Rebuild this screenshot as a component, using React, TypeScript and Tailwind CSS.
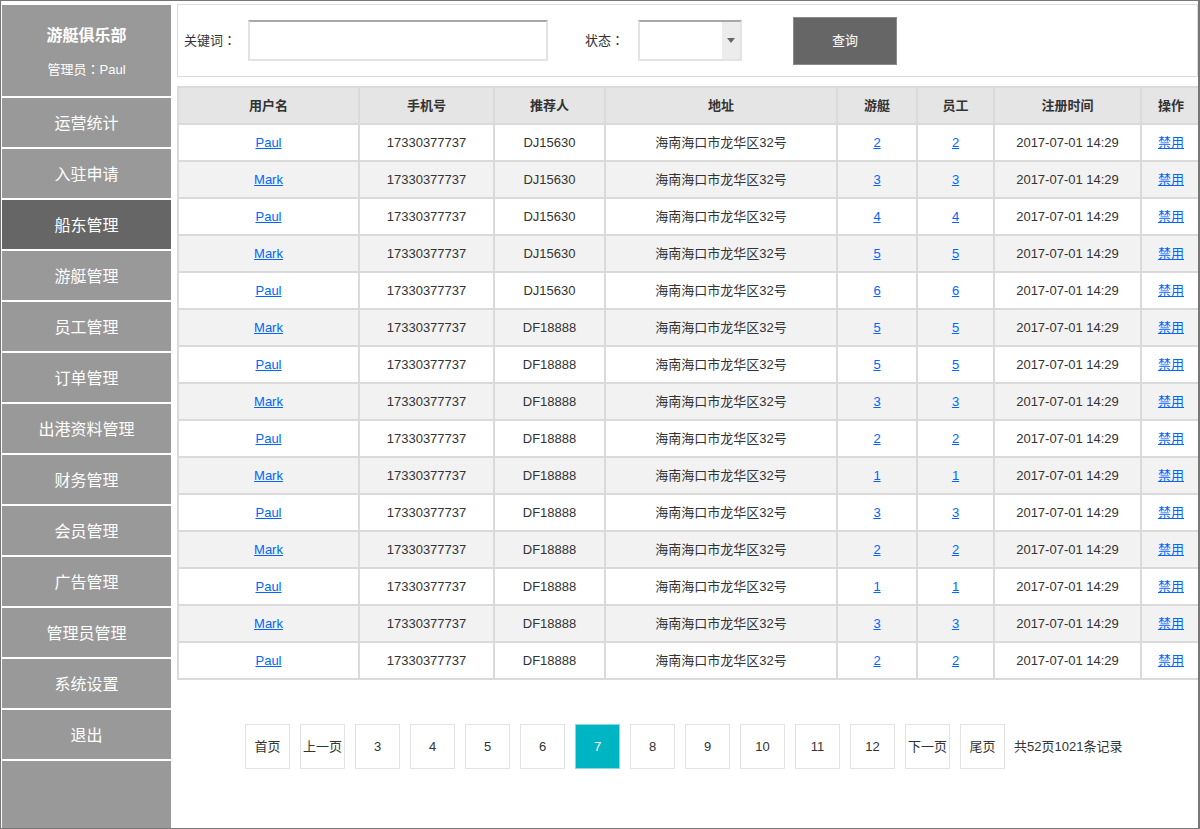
import React from "react";

const menu = [
  "运营统计",
  "入驻申请",
  "船东管理",
  "游艇管理",
  "员工管理",
  "订单管理",
  "出港资料管理",
  "财务管理",
  "会员管理",
  "广告管理",
  "管理员管理",
  "系统设置",
  "退出",
];

const rows: [string, string, number][] = [
  ["Paul", "DJ15630", 2],
  ["Mark", "DJ15630", 3],
  ["Paul", "DJ15630", 4],
  ["Mark", "DJ15630", 5],
  ["Paul", "DJ15630", 6],
  ["Mark", "DF18888", 5],
  ["Paul", "DF18888", 5],
  ["Mark", "DF18888", 3],
  ["Paul", "DF18888", 2],
  ["Mark", "DF18888", 1],
  ["Paul", "DF18888", 3],
  ["Mark", "DF18888", 2],
  ["Paul", "DF18888", 1],
  ["Mark", "DF18888", 3],
  ["Paul", "DF18888", 2],
];

const headers = ["用户名", "手机号", "推荐人", "地址", "游艇", "员工", "注册时间", "操作"];

const gridCols = "grid grid-cols-[181px_135px_111px_232px_80px_77px_147px_60px] w-[1023px]";
const cell = "h-[37px] border-l-2 border-t-2 border-[#dadada] flex items-center justify-center";
const link = "text-[#0066ff] underline";

const pages = ["首页", "上一页", "3", "4", "5", "6", "7", "8", "9", "10", "11", "12", "下一页", "尾页"];

function Colon() {
  return <span className="font-['Noto_Sans_CJK_TC',sans-serif]">：</span>;
}

export default function App() {
  return (
    <div className="w-[1200px] h-[829px] border-t border-l border-b border-r-2 border-[#777] flex bg-white overflow-hidden font-['Liberation_Sans','Noto_Sans_CJK_SC',sans-serif] text-[#333]">
      {/* Sidebar */}
      <div className="w-[169px] ml-[1px] mt-[4px] flex flex-col gap-[2px] shrink-0">
        <div className="h-[91px] bg-[#999] flex flex-col items-center text-white pt-[21px]">
          <div className="text-[16px] leading-[20px] font-bold">游艇俱乐部</div>
          <div className="text-[13px] leading-[16px] mt-[15px]">
            管理员
            <Colon />
            Paul
          </div>
        </div>
        {menu.map((m) => (
          <div
            key={m}
            className={`h-[49px] flex items-center justify-center text-white text-[16px] pt-[3px] ${
              m === "船东管理" ? "bg-[#666]" : "bg-[#999]"
            }`}
          >
            {m}
          </div>
        ))}
        <div className="flex-1 bg-[#999]" />
      </div>

      {/* Main */}
      <div className="flex-1 ml-[6px] mt-[3px] flex flex-col overflow-hidden min-w-0">
        <div className="h-[73px] border border-[#dcdcdc] flex items-center pl-[6px] text-[13px] shrink-0">
          <span className="w-[64px]">
            关键词
            <Colon />
          </span>
          <div className="w-[300px] h-[41px] border-2 border-[#e3e3e3] border-t-[#a8a8a8] bg-white" />
          <span className="ml-[37px] w-[53px]">
            状态
            <Colon />
          </span>
          <div className="w-[104px] h-[41px] border-2 border-[#e3e3e3] border-t-[#a8a8a8] bg-white flex justify-end">
            <div className="w-[18px] h-full bg-[#ececec] flex items-center justify-center">
              <svg width="8" height="5" viewBox="0 0 8 5">
                <path d="M0 0 H8 L4 5 Z" fill="#666" />
              </svg>
            </div>
          </div>
          <button className="ml-[51px] w-[104px] h-[48px] bg-[#666] border border-[#8a8a8a] text-white text-[13px]">
            查询
          </button>
        </div>

        <div className="mt-[9px] border-b-2 border-[#dadada] w-[1023px] text-[13px]">
          <div className={`${gridCols} bg-[#e5e5e5] font-bold`}>
            {headers.map((h) => (
              <div key={h} className={cell}>
                {h}
              </div>
            ))}
          </div>
          {rows.map(([name, ref, n], i) => (
            <div key={i} className={`${gridCols} ${i % 2 === 1 ? "bg-[#f2f2f2]" : "bg-white"}`}>
              <div className={cell}>
                <a className={link}>{name}</a>
              </div>
              <div className={cell}>17330377737</div>
              <div className={cell}>{ref}</div>
              <div className={cell}>海南海口市龙华区32号</div>
              <div className={cell}>
                <a className={link}>{n}</a>
              </div>
              <div className={cell}>
                <a className={link}>{n}</a>
              </div>
              <div className={cell}>2017-07-01 14:29</div>
              <div className={cell}>
                <a className={link}>禁用</a>
              </div>
            </div>
          ))}
        </div>

        <div className="mt-[44px] flex items-center pl-[68px] gap-[10px] text-[13px]">
          {pages.map((p) => (
            <div
              key={p}
              className={`w-[45px] h-[45px] border flex items-center justify-center shrink-0 ${
                p === "7" ? "bg-[#00b5c3] border-[#8fd8de] text-white" : "border-[#e3e3e3] bg-white"
              }`}
            >
              {p}
            </div>
          ))}
          <span className="whitespace-nowrap -ml-[1px]">共52页1021条记录</span>
        </div>
      </div>
    </div>
  );
}
